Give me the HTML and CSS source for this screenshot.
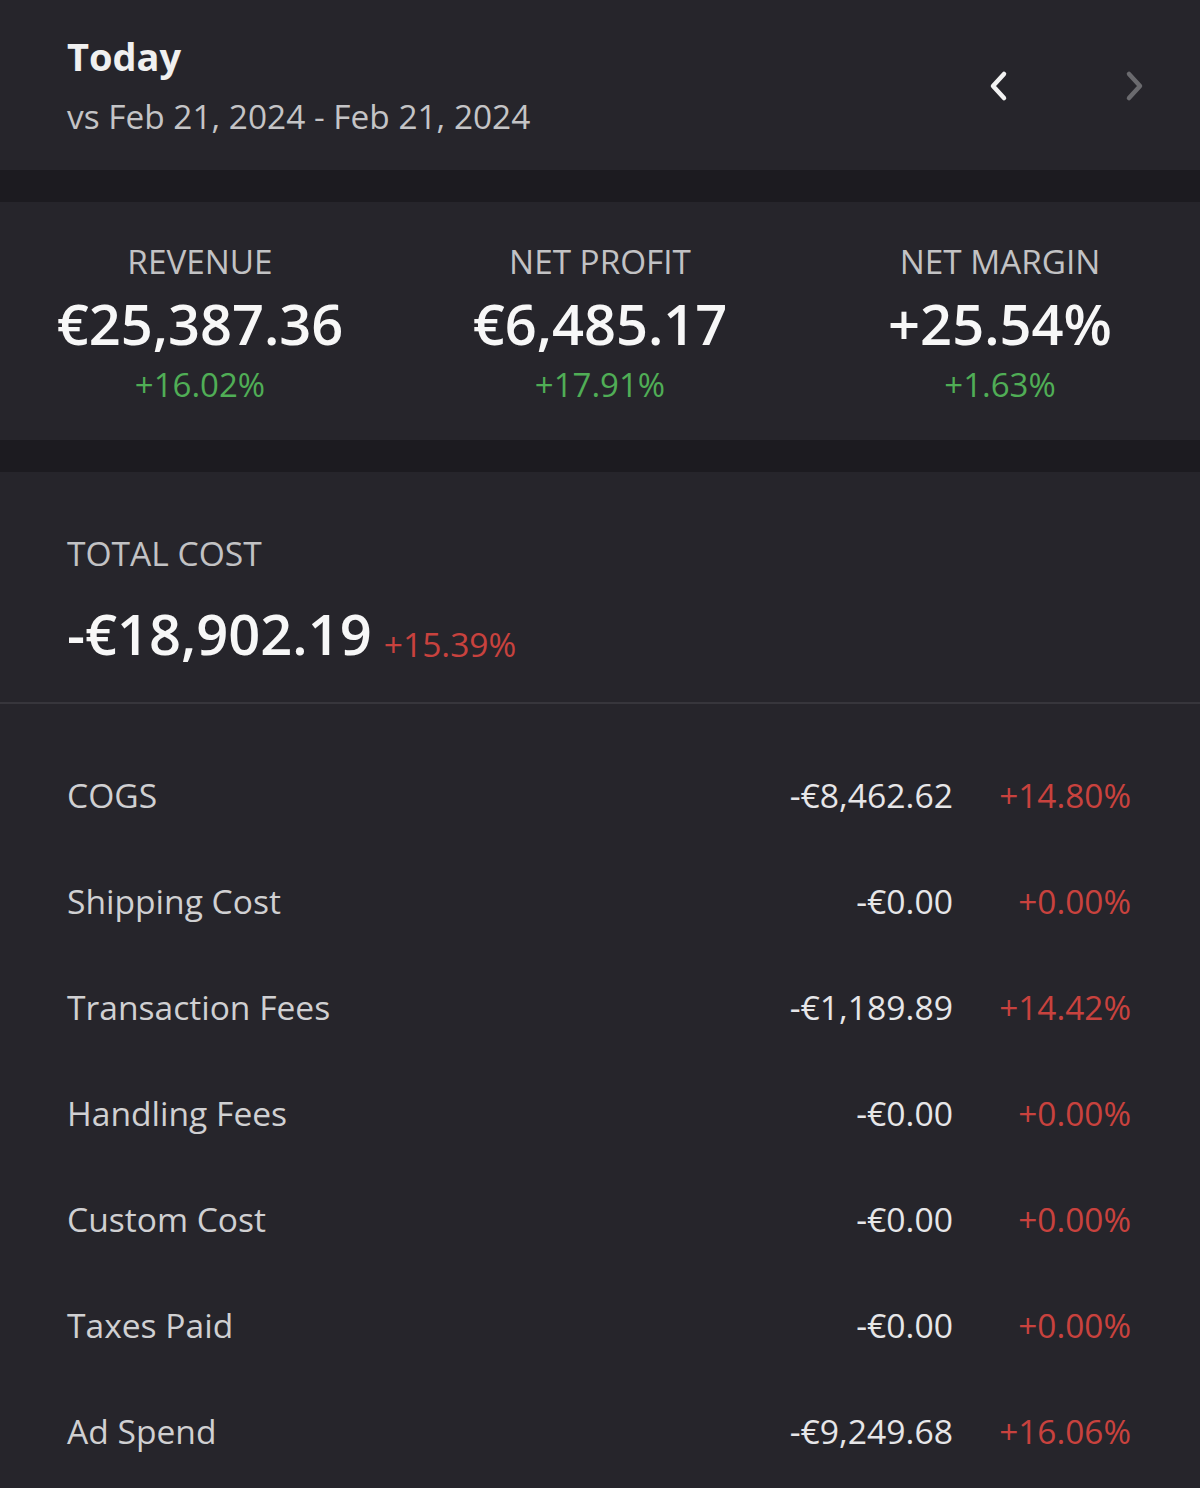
FILE: index.html
```html
<!DOCTYPE html>
<html lang="en">
<head>
  <meta charset="UTF-8" />
  <title>Profit Overview</title>
  <link rel="stylesheet" href="styles.css">
</head>
<body>
  <div id="app">
    <div id="period-header">
      <div class="period-text">
        <h1>Today</h1>
        <div class="compare">vs Feb 21, 2024 - Feb 21, 2024</div>
      </div>
      <div class="period-nav">
        <button class="nav-btn" aria-label="Previous">
          <svg width="28" height="40" viewBox="0 0 28 40"><path d="M19 8 L8 20 L19 32" fill="none" stroke="#f2f2f2" stroke-width="4.5" stroke-linecap="round" stroke-linejoin="round"/></svg>
        </button>
        <button class="nav-btn disabled" aria-label="Next">
          <svg width="28" height="40" viewBox="0 0 28 40"><path d="M9 8 L20 20 L9 32" fill="none" stroke="#6a6a6e" stroke-width="4.5" stroke-linecap="round" stroke-linejoin="round"/></svg>
        </button>
      </div>
    </div>

    <div class="spacer"></div>

    <div id="kpis">
      <div class="kpi">
        <div class="kpi-label">REVENUE</div>
        <div class="kpi-value">€25,387.36</div>
        <div class="kpi-change up">+16.02%</div>
      </div>
      <div class="kpi">
        <div class="kpi-label">NET PROFIT</div>
        <div class="kpi-value">€6,485.17</div>
        <div class="kpi-change up">+17.91%</div>
      </div>
      <div class="kpi">
        <div class="kpi-label">NET MARGIN</div>
        <div class="kpi-value">+25.54%</div>
        <div class="kpi-change up">+1.63%</div>
      </div>
    </div>

    <div class="spacer"></div>

    <div id="total-cost">
      <div class="total-label">TOTAL COST</div>
      <div class="total-line">
        <span class="total-value">-€18,902.19</span>
        <span class="total-change down">+15.39%</span>
      </div>
    </div>

    <ul id="cost-list">
      <li><span class="cost-name">COGS</span><span class="cost-value">-€8,462.62</span><span class="cost-change down">+14.80%</span></li>
      <li><span class="cost-name">Shipping Cost</span><span class="cost-value">-€0.00</span><span class="cost-change down">+0.00%</span></li>
      <li><span class="cost-name">Transaction Fees</span><span class="cost-value">-€1,189.89</span><span class="cost-change down">+14.42%</span></li>
      <li><span class="cost-name">Handling Fees</span><span class="cost-value">-€0.00</span><span class="cost-change down">+0.00%</span></li>
      <li><span class="cost-name">Custom Cost</span><span class="cost-value">-€0.00</span><span class="cost-change down">+0.00%</span></li>
      <li><span class="cost-name">Taxes Paid</span><span class="cost-value">-€0.00</span><span class="cost-change down">+0.00%</span></li>
      <li><span class="cost-name">Ad Spend</span><span class="cost-value">-€9,249.68</span><span class="cost-change down">+16.06%</span></li>
    </ul>
  </div>
</body>
</html>
```

FILE: styles.css
```css
html, body {
  margin: 0;
  padding: 0;
  height: 100%;
  font-family: "Open Sans", "Noto Sans", sans-serif;
  background: #26252b;
  color: #f2f2f2;
  overflow: hidden;
}

#app {
  display: flex;
  flex-direction: column;
  width: 100%;
}

.spacer {
  height: 32px;
  background: #1c1b20;
}

/* header */

#period-header {
  height: 170px;
  display: flex;
  align-items: center;
  justify-content: space-between;
  padding: 0 52px 0 67px;
  box-sizing: border-box;
}

#period-header h1 {
  margin: 0;
  font-size: 38px;
  font-weight: 700;
  line-height: 44px;
  color: #f0f0f0;
}

.compare {
  margin-top: 18px;
  font-size: 33.4px;
  line-height: 40px;
  color: #c4c4c6;
}

.period-nav {
  display: flex;
  gap: 107px;
  margin-top: 2px;
}

.nav-btn {
  background: transparent;
  border: none;
  padding: 0;
  width: 28px;
  height: 40px;
  cursor: pointer;
}

/* kpis */

#kpis {
  height: 238px;
  display: grid;
  grid-template-columns: 1fr 1fr 1fr;
  align-items: center;
}

.kpi {
  display: flex;
  flex-direction: column;
  align-items: center;
  margin-top: 3px;
}

.kpi-label {
  font-size: 33.3px;
  line-height: 40px;
  color: #c2c2c4;
}

.kpi-value {
  font-size: 56px;
  font-weight: 600;
  line-height: 64px;
  margin-top: 10px;
  color: #f7f7f7;
}

.kpi-change {
  font-size: 33px;
  line-height: 40px;
  margin-top: 10px;
}

.up {
  color: #50ae56;
}

.down {
  color: #c8423e;
}

/* total cost */

#total-cost {
  height: 232px;
  padding: 61px 67px 0;
  box-sizing: border-box;
  border-bottom: 2px solid #37363c;
}

.total-label {
  font-size: 33.6px;
  line-height: 40px;
  color: #c2c2c4;
}

.total-line {
  margin-top: 28px;
  display: flex;
  align-items: baseline;
  gap: 12px;
}

.total-value {
  font-size: 56px;
  font-weight: 600;
  line-height: 64px;
  color: #f7f7f7;
}

.total-change {
  font-size: 33.6px;
  position: relative;
  top: 2px;
}

/* cost rows */

#cost-list {
  list-style: none;
  margin: 0;
  padding: 38px 0 0;
}

#cost-list li {
  height: 106px;
  display: flex;
  align-items: center;
  padding: 0 69px 0 67px;
}

.cost-name {
  flex-grow: 1;
  font-size: 33.6px;
  color: #d0d0d2;
}

.cost-value {
  font-size: 33.7px;
  color: #e6e6e8;
  text-align: right;
}

.cost-change {
  width: 178px;
  font-size: 33.4px;
  text-align: right;
}
```
